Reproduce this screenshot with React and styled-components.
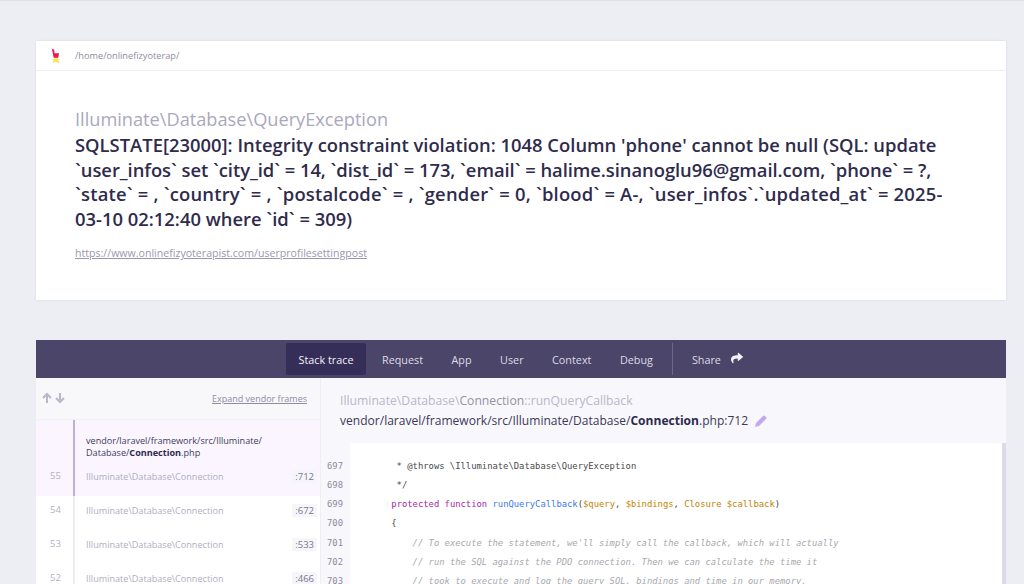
import React from "react";
import styled, { createGlobalStyle } from "styled-components";
import { FaShare } from "react-icons/fa";

const Global = createGlobalStyle`
  html, body {
    margin: 0;
    height: 584px;
    overflow: hidden;
    background: #eceef4;
    font-family: "Open Sans", "Noto Sans", sans-serif;
  }
  * { box-sizing: border-box; }
`;

const Page = styled.div`
  height: 584px;
  overflow: hidden;
  border-top: 1px solid #dfe1e8;
  padding: 40px 18px 0 36px;
`;

const Summary = styled.section`
  height: 259px;
  background: #fff;
  box-shadow: 0 0 2px rgba(60, 60, 90, 0.12);
`;

const TopBar = styled.header`
  height: 30px;
  display: flex;
  align-items: center;
  padding-left: 15px;
  gap: 15px;
  border-bottom: 1px solid #eceef2;
`;

const Path = styled.span`
  font-size: 9.2px;
  color: #8f8ca3;
`;

const SummaryBody = styled.div`
  padding: 36px 39px 0;
`;

const ExceptionClass = styled.div`
  font-size: 18.2px;
  line-height: 24px;
  color: #aaa8bd;
`;

const Message = styled.h1`
  margin: 2px 0 0;
  font-size: 18.4px;
  line-height: 24.6px;
  font-weight: 600;
  color: #2f2b4c;
`;

const MessageLine = styled.span`
  display: block;
  white-space: nowrap;
  letter-spacing: ${({ $track }) => $track || 0}px;
`;

const RequestUrl = styled.a`
  display: block;
  margin-top: 14px;
  font-size: 10.6px;
  line-height: 16px;
  color: #9a97ad;
  text-decoration: underline;
`;

const Trace = styled.section`
  margin-top: 40px;
  background: #fff;
`;

const Nav = styled.nav`
  height: 38px;
  background: #4b4569;
  display: flex;
  justify-content: center;
  align-items: center;
  padding-left: 6px;
`;

const Tab = styled.span`
  height: 32px;
  display: flex;
  align-items: center;
  padding: 0 ${({ $active }) => ($active ? "12.5px" : "14.25px")};
  margin-right: ${({ $active }) => ($active ? "1.75px" : "0")};
  font-size: 10.8px;
  color: ${({ $active }) => ($active ? "#f2f1f7" : "#dcdae6")};
  background: ${({ $active }) => ($active ? "#352e58" : "transparent")};
  border-radius: 2px;
`;

const ShareTab = styled(Tab)`
  margin-left: 4.75px;
  padding: 0 19px;
  gap: 10px;
  border-left: 1px solid #6d6889;
  border-radius: 0;
  svg { font-size: 12px; color: #f2f1f7; margin-top: -3px; }
`;

const Columns = styled.div`
  display: grid;
  grid-template-columns: 285px 1fr;
  height: 206px;
`;

const Sidebar = styled.aside`
  background: #fff;
  border-right: 1px solid #eeeef4;
  overflow: hidden;
`;

const SidebarHead = styled.div`
  height: 42px;
  padding: 0 13px 0 4.5px;
  background: #f8f8fb;
  display: flex;
  align-items: center;
  justify-content: space-between;
  border-bottom: 1px solid #f1f1f6;
`;

const Arrows = styled.span`
  display: flex;
  gap: 1px;
  margin-top: -2px;
  color: #b9b7c9;
`;

const Expand = styled.a`
  font-size: 9px;
  color: #8f8ca3;
  text-decoration: underline;
`;

const Frame = styled.div`
  display: grid;
  grid-template-columns: 39px 1fr;
  background: ${({ $active }) => ($active ? "#faf5fe" : "#fff")};
`;

const FrameNumber = styled.div`
  display: flex;
  flex-direction: column;
  justify-content: flex-end;
  padding: 0 0 12px 14px;
  font-size: 9.5px;
  line-height: 16px;
  color: #b4b2c4;
  border-right: 2px solid ${({ $active }) => ($active ? "#b9b4cb" : "#ebebf2")};
`;

const FrameMain = styled.div`
  padding: ${({ $active }) => ($active ? "15px 3px 12px 11px" : "6px 3px 12px 11px")};
`;

const FrameFile = styled.div`
  font-size: 9.1px;
  line-height: 12px;
  color: #413c5f;
  margin-bottom: 9px;
  b { font-weight: 700; color: #2f2b4c; }
`;

const FrameRow = styled.div`
  display: flex;
  justify-content: space-between;
  align-items: center;
  height: 16px;
`;

const FrameClass = styled.span`
  font-size: 9.1px;
  color: #b0aec1;
`;

const LineNo = styled.span`
  font-size: 9.5px;
  line-height: 13px;
  padding: 0 3px;
  color: #79768e;
  background: #f6f5fa;
`;

const Detail = styled.div`
  display: flex;
  flex-direction: column;
  min-width: 0;
`;

const DetailHead = styled.div`
  height: 65px;
  padding: 13px 0 0 19px;
  background: #f8f8fc;
`;

const Method = styled.div`
  font-size: 12.2px;
  line-height: 20px;
  color: #b9b7c9;
  b { font-weight: 400; color: #96939f; }
`;

const FilePath = styled.div`
  display: flex;
  align-items: center;
  gap: 7px;
  font-size: 12.05px;
  line-height: 20px;
  color: #3d3859;
  b { font-weight: 700; color: #2f2b4c; }
`;

const CodeArea = styled.div`
  flex: 1;
  display: grid;
  grid-template-columns: 29px 1fr 4px;
  overflow: hidden;
`;

const Gutter = styled.div`
  background: #f8f8fc;
  padding: 13.5px 0 0 6px;
  font: 8.85px/19.3px "DejaVu Sans Mono", monospace;
  color: #8d8a9e;
`;

const Code = styled.div`
  padding: 13.5px 0 0 20px;
  font: 8.85px/19.3px "DejaVu Sans Mono", monospace;
  color: #4a4a4a;
  background: #fff;
  overflow: hidden;
`;

const CodeLine = styled.div`
  white-space: pre;
  height: 19.3px;
`;

const Scrollbar = styled.div`
  background: #dcd9ea;
`;

const Keyword = styled.span`color: #a626a4;`;
const Fn = styled.span`color: #4078f2;`;
const Var = styled.span`color: #c18401;`;
const Comment = styled.span`color: #a8a9ae; font-style: italic;`;

const frames = [
  { no: 54, line: 672 },
  { no: 53, line: 533 },
  { no: 52, line: 466 },
];

const gutterLines = [697, 698, 699, 700, 701, 702, 703];

const Logo = () => (
  <svg width="9" height="16" viewBox="0 0 10 16">
    <path d="M1 0 L3.5 1 L4 5 L9 5 L8 10 L3 10 Z" fill="#e6194b" />
    <path d="M3 10.5 L8 10.5 L9 16 L5 14 L2 16 Z" fill="#ffe14d" />
  </svg>
);

const ArrowUp = () => (
  <svg width="12" height="12" viewBox="0 0 12 12" fill="none" stroke="currentColor" strokeWidth="2">
    <path d="M6 11 V2 M2 6 L6 2 L10 6" />
  </svg>
);

const ArrowDown = () => (
  <svg width="12" height="12" viewBox="0 0 12 12" fill="none" stroke="currentColor" strokeWidth="2">
    <path d="M6 1 V10 M2 6 L6 10 L10 6" />
  </svg>
);

const Pencil = () => (
  <svg width="12" height="12" viewBox="0 0 12 12" fill="#c3a8ee">
    <path d="M0 12 L1 8 L8 1 Q9 0 10 1 L11 2 Q12 3 11 4 L4 11 Z" />
  </svg>
);

export default function App() {
  return (
    <>
      <Global />
      <Page>
        <Summary>
          <TopBar>
            <Logo />
            <Path>/home/onlinefizyoterap/</Path>
          </TopBar>
          <SummaryBody>
            <ExceptionClass>Illuminate\Database\QueryException</ExceptionClass>
            <Message>
              <MessageLine>SQLSTATE[23000]: Integrity constraint violation: 1048 Column 'phone' cannot be null (SQL: update</MessageLine>
              <MessageLine $track={-0.05}>`user_infos` set `city_id` = 14, `dist_id` = 173, `email` = halime.sinanoglu96@gmail.com, `phone` = ?,</MessageLine>
              <MessageLine $track={0.19}>`state` = , `country` = , `postalcode` = , `gender` = 0, `blood` = A-, `user_infos`.`updated_at` = 2025-</MessageLine>
              <MessageLine>03-10 02:12:40 where `id` = 309)</MessageLine>
            </Message>
            <RequestUrl>https://www.onlinefizyoterapist.com/userprofilesettingpost</RequestUrl>
          </SummaryBody>
        </Summary>

        <Trace>
          <Nav>
            <Tab $active>Stack trace</Tab>
            <Tab>Request</Tab>
            <Tab>App</Tab>
            <Tab>User</Tab>
            <Tab>Context</Tab>
            <Tab>Debug</Tab>
            <ShareTab>Share <FaShare /></ShareTab>
          </Nav>
          <Columns>
            <Sidebar>
              <SidebarHead>
                <Arrows><ArrowUp /><ArrowDown /></Arrows>
                <Expand>Expand vendor frames</Expand>
              </SidebarHead>
              <Frame $active>
                <FrameNumber $active>55</FrameNumber>
                <FrameMain $active>
                  <FrameFile>vendor/laravel/framework/src/Illuminate/<br />Database/<b>Connection</b>.php</FrameFile>
                  <FrameRow>
                    <FrameClass>Illuminate\Database\Connection</FrameClass>
                    <LineNo>:712</LineNo>
                  </FrameRow>
                </FrameMain>
              </Frame>
              {frames.map((f) => (
                <Frame key={f.no}>
                  <FrameNumber>{f.no}</FrameNumber>
                  <FrameMain>
                    <FrameRow>
                      <FrameClass>Illuminate\Database\Connection</FrameClass>
                      <LineNo>:{f.line}</LineNo>
                    </FrameRow>
                  </FrameMain>
                </Frame>
              ))}
            </Sidebar>
            <Detail>
              <DetailHead>
                <Method>Illuminate\Database\<b>Connection</b>::runQueryCallback</Method>
                <FilePath>
                  <span>vendor/laravel/framework/src/Illuminate/Database/<b>Connection</b>.php:712</span>
                  <Pencil />
                </FilePath>
              </DetailHead>
              <CodeArea>
                <Gutter>{gutterLines.map((n) => <div key={n}>{n}</div>)}</Gutter>
                <Code>
                  <CodeLine>{"     * @throws \\Illuminate\\Database\\QueryException"}</CodeLine>
                  <CodeLine>{"     */"}</CodeLine>
                  <CodeLine>{"    "}<Keyword>protected function</Keyword> <Fn>runQueryCallback</Fn>(<Var>$query</Var>, <Var>$bindings</Var>, <Var>Closure $callback</Var>)</CodeLine>
                  <CodeLine>{"    {"}</CodeLine>
                  <CodeLine>{"        "}<Comment>// To execute the statement, we'll simply call the callback, which will actually</Comment></CodeLine>
                  <CodeLine>{"        "}<Comment>// run the SQL against the PDO connection. Then we can calculate the time it</Comment></CodeLine>
                  <CodeLine>{"        "}<Comment>// took to execute and log the query SQL, bindings and time in our memory.</Comment></CodeLine>
                </Code>
                <Scrollbar />
              </CodeArea>
            </Detail>
          </Columns>
        </Trace>
      </Page>
    </>
  );
}
